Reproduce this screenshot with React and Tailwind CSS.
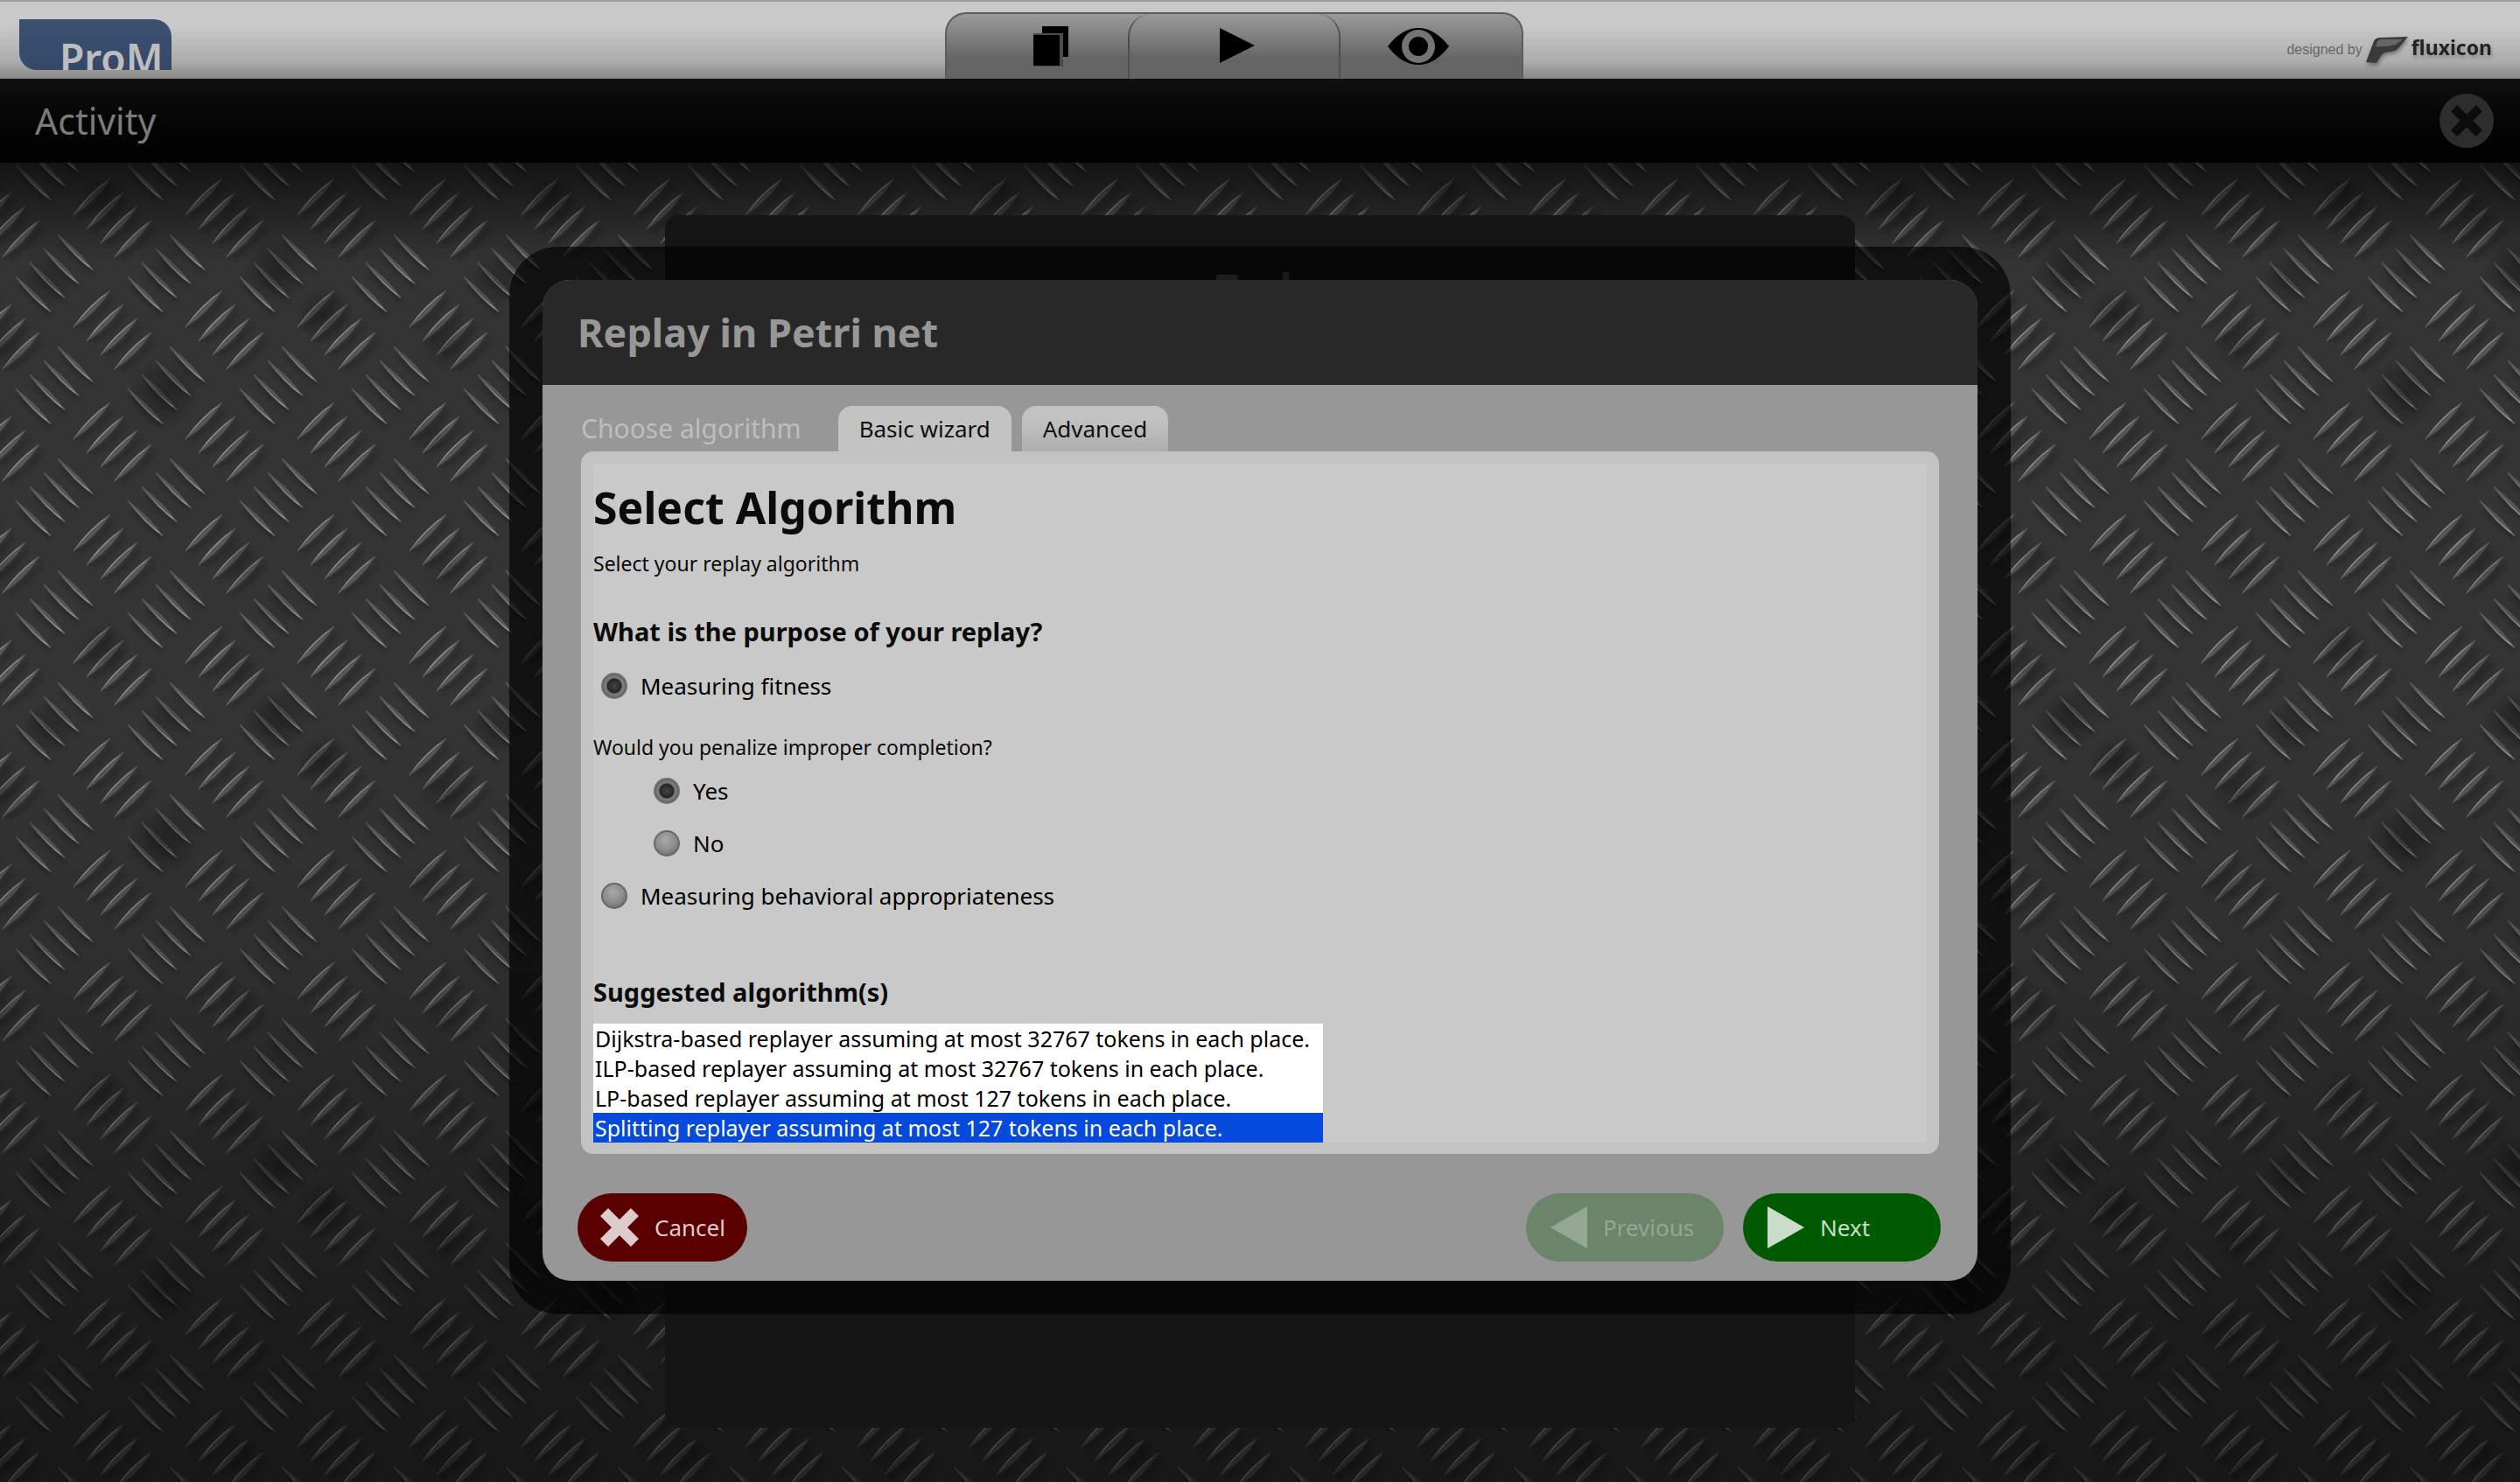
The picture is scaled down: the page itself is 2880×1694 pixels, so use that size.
import React, { useState } from "react";

const FALLING = [
  [66, 12],
  [50, 28],
  [34, 44],
  [18, 60],
];
const RISING = [
  [84, 76],
  [99, 92],
  [115, 108],
  [131, 124],
];
const WRAPS = [
  [0, 0],
  [-128, 0],
  [0, -128],
  [-128, -128],
];
/* x, y, radius, darkness of the worn patches on one 512px plate */
const PATCHES = [
  [118, 229, 32, 0.3],
  [55, 321, 32, 0.3],
  [187, 450, 42, 0.42],
  [314, 311, 38, 0.42],
  [370, 359, 34, 0.4],
  [190, 309, 28, 0.2],
  [272, 256, 30, 0.2],
  [-1, 393, 34, 0.28],
  [511, 393, 34, 0.28],
  [277, 131, 30, 0.2],
  [-1, 135, 28, 0.2],
  [511, 135, 28, 0.2],
  [493, 500, 28, 0.2],
  [318, 184, 28, 0.15],
];

function DiamondPlate() {
  return (
    <svg className="absolute inset-0 h-full w-full" aria-hidden="true">
      <defs>
        <filter id="soft" x="-30%" y="-30%" width="160%" height="160%">
          <feGaussianBlur stdDeviation="2.4" />
        </filter>
        <radialGradient id="worn">
          <stop offset="0" stopColor="#101010" />
          <stop offset="0.4" stopColor="#101010" stopOpacity="0.65" />
          <stop offset="1" stopColor="#101010" stopOpacity="0" />
        </radialGradient>
        <linearGradient id="shade" x1="0" y1="0" x2="0" y2="1">
          <stop offset="0" stopColor="#000" stopOpacity="0.62" />
          <stop offset="0.03" stopColor="#000" stopOpacity="0.4" />
          <stop offset="0.075" stopColor="#000" stopOpacity="0.04" />
          <stop offset="0.4" stopColor="#000" stopOpacity="0.02" />
          <stop offset="0.6" stopColor="#000" stopOpacity="0.14" />
          <stop offset="0.75" stopColor="#000" stopOpacity="0.32" />
          <stop offset="0.9" stopColor="#000" stopOpacity="0.5" />
          <stop offset="1" stopColor="#000" stopOpacity="0.56" />
        </linearGradient>
        <linearGradient id="glintDown" x1="0" y1="0" x2="1" y2="1">
          <stop offset="0" stopColor="#585856" />
          <stop offset="0.5" stopColor="#8a8a82" />
          <stop offset="0.85" stopColor="#a3a398" />
          <stop offset="1" stopColor="#50504e" />
        </linearGradient>
        <linearGradient id="glintUp" x1="0" y1="1" x2="1" y2="0">
          <stop offset="0" stopColor="#585856" />
          <stop offset="0.3" stopColor="#9c9c92" />
          <stop offset="0.8" stopColor="#94948c" />
          <stop offset="1" stopColor="#50504e" />
        </linearGradient>
        <g id="falling">
          <path d="M4 8Q20 30 40 43" fill="none" stroke="#161616" strokeWidth="5" opacity="0.4" filter="url(#soft)" />
          <path d="M0 0Q25 18 41 41Q18 25 0 0Z" fill="#585856" />
          <path d="M0 0Q18 24 41 41" fill="none" stroke="url(#glintDown)" strokeWidth="1.3" />
        </g>
        <g id="rising">
          <path d="M6 43Q30 30 44 8" fill="none" stroke="#161616" strokeWidth="5" opacity="0.4" filter="url(#soft)" />
          <path d="M0 42Q16 17 42 0Q26 26 0 42Z" fill="#585856" />
          <path d="M0 42Q17 18 42 0" fill="none" stroke="url(#glintUp)" strokeWidth="1.3" />
        </g>
        <pattern id="tread" width="128" height="128" patternUnits="userSpaceOnUse" y="-186">
          <rect width="128" height="128" fill="#363636" />
          {WRAPS.map(([dx, dy]) => (
            <g key={dx + "," + dy} transform={`translate(${dx} ${dy})`}>
              {FALLING.map(([x, y]) => (
                <use key={x} href="#falling" x={x} y={y} />
              ))}
              {RISING.map(([x, y]) => (
                <use key={x} href="#rising" x={x} y={y} />
              ))}
            </g>
          ))}
        </pattern>
        <pattern id="patches" width="512" height="512" patternUnits="userSpaceOnUse" y="-186">
          {PATCHES.map(([x, y, r, o]) => (
            <circle key={x + "," + y} cx={x} cy={y} r={r} fill="url(#worn)" opacity={o} />
          ))}
        </pattern>
      </defs>
      <rect width="100%" height="100%" fill="url(#tread)" />
      <rect width="100%" height="100%" fill="url(#patches)" />
      <rect width="100%" height="100%" fill="url(#shade)" />
    </svg>
  );
}

function CrossIcon({ className }) {
  return (
    <svg viewBox="0 0 44 44" className={className} fill="currentColor" aria-hidden="true">
      <path d="M9 0L22 13L35 0L44 9L31 22L44 35L35 44L22 31L9 44L0 35L13 22L0 9Z" />
    </svg>
  );
}

function TopBar() {
  return (
    <header className="grid h-[90px] grid-cols-[1fr_auto_1fr] border-t-2 border-[#9c9c9c] bg-[linear-gradient(#c9c9c9_30%,#acacac_78%,#868686)]">
      <div className="pt-5 pl-[22px]">
        <div className="h-[58px] w-[174px] overflow-hidden rounded-tr-[20px] rounded-bl-[20px] bg-linear-to-b from-[#3c5070] to-[#344868] pt-3.5 pl-[46px] text-[46px] leading-[60px] font-semibold text-[#bdbdbd]">
          ProM
        </div>
      </div>
      <nav className="mt-3 mr-[59px] grid w-[661px] grid-cols-[207px_243px_1fr] rounded-t-[24px] border-2 border-b-0 border-[#5c5c5c] bg-[linear-gradient(#9a9a9a,#646464_70%)]">
        <button aria-label="Workspace" className="flex items-start justify-center pt-3.5 pl-[30px]">
          <svg viewBox="0 0 40 46" className="h-[46px] w-10" aria-hidden="true">
            <path d="M10 0H40V35H10Z" fill="#000" />
            <path d="M0 8H34V46H0Z" fill="#4c4c4c" />
            <path d="M0 10H30V45H0Z" fill="#000" />
          </svg>
        </button>
        <button aria-label="Actions" className="flex items-start justify-center rounded-t-[26px] border-x-2 border-[#4f4f4f] pt-4 pl-1.5">
          <svg viewBox="0 0 40 40" className="size-10" aria-hidden="true">
            <path d="M0 0L40 20L0 40Z" fill="#000" />
          </svg>
        </button>
        <button aria-label="Views" className="flex items-start justify-center pt-4 pr-[30px]">
          <svg viewBox="0 0 70 42" className="h-[42px] w-[70px]" aria-hidden="true">
            <path d="M0 21Q16 0 35 0Q54 0 70 21Q54 42 35 42Q16 42 0 21Z" fill="#000" />
            <circle cx="35" cy="21" r="19" fill="#747474" />
            <circle cx="35" cy="21" r="11" fill="#000" />
          </svg>
        </button>
      </nav>
      <div className="flex items-start justify-end gap-1 pt-10 pr-8">
        <span className="pt-[5px] font-['Liberation_Sans',sans-serif] text-base leading-5 text-[#666]">designed by</span>
        <svg viewBox="0 0 48 32" className="h-8 w-12 drop-shadow-[1px_3px_2px_rgba(0,0,0,0.35)]" aria-hidden="true">
          <path d="M0 29L9 5Q11 1 16 1L48 0L38 12Q35 16 29 17L22 18Q19 19 17 22L12 30Z" fill="#3a3a3a" />
          <path d="M16 3H42L34 9Q22 12 11 11L13 5Z" fill="#666" />
        </svg>
        <span className="text-[23px] leading-6 font-bold text-[#222] drop-shadow-[1px_3px_2px_rgba(0,0,0,0.25)]">fluxicon</span>
      </div>
    </header>
  );
}

function Radio({ label, className, ...rest }) {
  return (
    <label className={"flex h-[60px] items-center gap-[15px] text-[26px] leading-[60px] text-black " + (className || "")}>
      <input
        type="radio"
        className="size-[30px] shrink-0 appearance-none rounded-full border-2 border-[#686868] bg-[radial-gradient(circle_at_45%_35%,#a9a9a9,#8a8a8a_55%,#5c5c5c)] checked:border-[#707070] checked:bg-[radial-gradient(circle,#454545_0,#262626_8px,#747474_9px,#7c7c7c_11px,#505050_14px)]"
        {...rest}
      />
      {label}
    </label>
  );
}

const ALGORITHMS = [
  "Dijkstra-based replayer assuming at most 32767 tokens in each place.",
  "ILP-based replayer assuming at most 32767 tokens in each place.",
  "LP-based replayer assuming at most 127 tokens in each place.",
  "Splitting replayer assuming at most 127 tokens in each place.",
];

function WizardPanel() {
  const [purpose, setPurpose] = useState("fitness");
  const [penalize, setPenalize] = useState("yes");
  const [algorithm, setAlgorithm] = useState(ALGORITHMS[3]);
  return (
    <div className="rounded-[14px] bg-[#c3c3c3] p-3.5 pb-[13px]">
      <div className="bg-[#c9c9c9] pt-5 text-[#0b0b0b]">
        <h1 className="text-[50px] leading-[60px] font-bold">Select Algorithm</h1>
        <p className="mt-3.5 text-[23px] leading-10">Select your replay algorithm</p>
        <h2 className="mt-[38px] text-[29px] leading-10 font-bold">What is the purpose of your replay?</h2>
        <Radio
          label="Measuring fitness"
          className="mt-3 pl-[9px]"
          name="purpose"
          checked={purpose === "fitness"}
          onChange={() => setPurpose("fitness")}
        />
        <p className="mt-5 text-[23px] leading-10">Would you penalize improper completion?</p>
        <Radio label="Yes" className="pl-[69px]" name="penalize" checked={penalize === "yes"} onChange={() => setPenalize("yes")} />
        <Radio label="No" className="pl-[69px]" name="penalize" checked={penalize === "no"} onChange={() => setPenalize("no")} />
        <Radio
          label="Measuring behavioral appropriateness"
          className="pl-[9px]"
          name="purpose"
          checked={purpose === "behavior"}
          onChange={() => setPurpose("behavior")}
        />
        <h2 className="mt-15 mb-4 text-[29px] leading-10 font-bold">
          <label htmlFor="algorithms">Suggested algorithm(s)</label>
        </h2>
        <select
          id="algorithms"
          size={4}
          value={algorithm}
          onChange={(e) => setAlgorithm(e.target.value)}
          className="block h-[136px] w-[834px] overflow-hidden bg-white text-[25px] text-black outline-none"
        >
          {ALGORITHMS.map((name) => (
            <option
              key={name}
              className="h-[34px] px-0.5 py-0 leading-[34px] checked:bg-[linear-gradient(#0549dd,#0549dd)] checked:text-white"
            >
              {name}
            </option>
          ))}
        </select>
      </div>
    </div>
  );
}

function WizardDialog() {
  const button = "flex h-[78px] items-center rounded-full text-[26px] leading-[78px]";
  return (
    <section role="dialog" aria-label="Replay in Petri net" className="rounded-[56px] bg-black/65 p-[38px]">
      <div className="overflow-hidden rounded-[32px] bg-[#979797]">
        <div className="bg-[#282828] pl-10 text-[45px] leading-[120px] font-bold text-[#979797]">Replay in Petri net</div>
        <div className="px-11 pt-6">
          <div className="flex h-[52px] items-stretch gap-3 leading-[52px] text-[#0f0f0f]" role="tablist">
            <span className="pr-[30px] text-[30px] text-[#bebebe]">Choose algorithm</span>
            <button role="tab" aria-selected="true" className="rounded-t-[16px] bg-[#c3c3c3] px-6 text-[26px]">
              Basic wizard
            </button>
            <button role="tab" aria-selected="false" className="rounded-t-[16px] bg-linear-to-b from-[#c2c2c2] from-30% to-[#adadad] px-6 text-[26px]">
              Advanced
            </button>
          </div>
          <WizardPanel />
        </div>
        <div className="flex items-center justify-between pt-[45px] pr-[42px] pb-[22px] pl-10">
          <button className={button + " w-[194px] gap-[18px] bg-[#5b0000] pl-[26px] text-[#dccccc]"}>
            <CrossIcon className="size-11" />
            Cancel
          </button>
          <div className="flex gap-[22px]">
            <button disabled className={button + " w-[226px] gap-[18px] bg-[#6a856a] pl-7 text-[#93a793]"}>
              <svg viewBox="0 0 42 48" className="h-12 w-[42px]" fill="currentColor" aria-hidden="true">
                <path d="M42 0V48L0 24Z" />
              </svg>
              Previous
            </button>
            <button className={button + " w-[226px] gap-[18px] bg-[#005b00] pl-7 text-[#cadcca]"}>
              <svg viewBox="0 0 42 48" className="h-12 w-[42px]" fill="currentColor" aria-hidden="true">
                <path d="M0 0L42 24L0 48Z" />
              </svg>
              Next
            </button>
          </div>
        </div>
      </div>
    </section>
  );
}

export default function App() {
  return (
    <div className="flex min-h-screen flex-col bg-black font-['Noto_Sans',sans-serif]">
      <TopBar />
      <div className="flex h-24 items-center justify-between bg-linear-to-b from-[#101010] to-[#020202] to-80% pr-[30px] pl-10">
        <span className="pt-0.5 text-[41px] text-[#7b7b7b]">Activity</span>
        <button aria-label="Close" className="flex size-[62px] items-center justify-center rounded-full bg-[#2d2d2d] text-[#0b0d0c]">
          <CrossIcon className="size-9" />
        </button>
      </div>
      <main className="relative grid flex-1 overflow-hidden">
        <DiamondPlate />
        <div className="relative mx-auto mt-[60px] mb-[62px] w-full max-w-[1360px] rounded-2xl bg-[#141414] pt-[53px] text-center text-[46px] leading-[60px] font-bold text-[#505050] [grid-area:1/1]">
          Task
        </div>
        <div className="relative mx-auto mt-24 w-full max-w-[1716px] self-start [grid-area:1/1]">
          <WizardDialog />
        </div>
      </main>
    </div>
  );
}
